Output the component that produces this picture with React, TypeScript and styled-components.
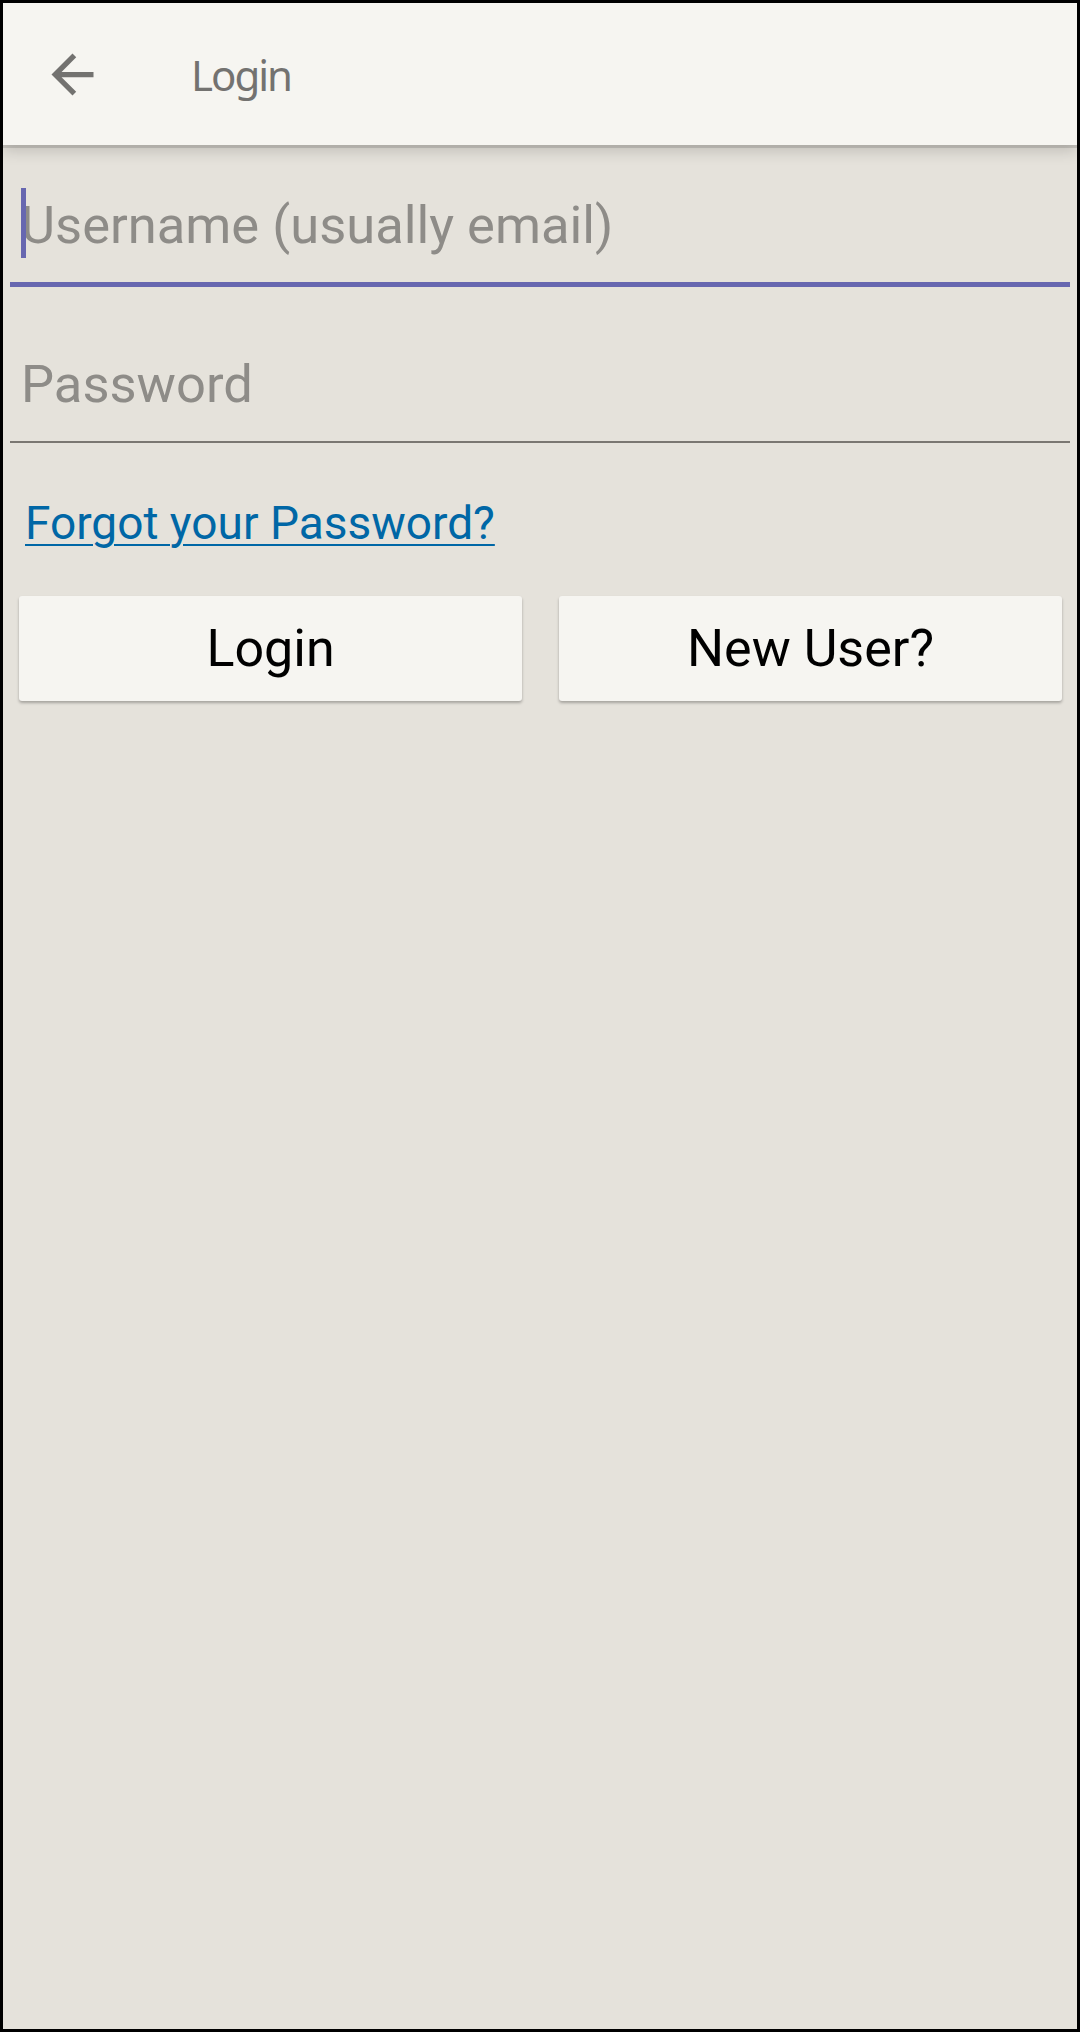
import styled, { createGlobalStyle } from "styled-components";

const GlobalStyle = createGlobalStyle`
  html, body {
    margin: 0;
    padding: 0;
    background: #000;
  }
  * {
    box-sizing: border-box;
  }
`;

const Screen = styled.div`
  width: 1080px;
  height: 2032px;
  border: 3px solid #000;
  background: #e5e2db;
  display: flex;
  flex-direction: column;
  font-family: Roboto, "Noto Sans", sans-serif;
  overflow: hidden;
`;

const AppBar = styled.header`
  position: relative;
  z-index: 1;
  height: 142px;
  flex-shrink: 0;
  display: flex;
  align-items: center;
  background: #f6f5f1;
  box-shadow: 0 3px 0 rgba(0, 0, 0, 0.12), 0 6px 14px rgba(0, 0, 0, 0.16);
`;

const BackButton = styled.button`
  margin-left: 38px;
  width: 63px;
  height: 63px;
  padding: 0;
  border: none;
  background: transparent;
  display: flex;
  align-items: center;
  justify-content: center;
  color: #737270;
  cursor: pointer;

  & svg {
    width: 63px;
    height: 63px;
    fill: currentColor;
  }
`;

const Title = styled.h1`
  margin: 0 0 0 87px;
  font-family: "Noto Sans", Roboto, sans-serif;
  font-weight: 400;
  font-size: 42px;
  letter-spacing: -2px;
  color: #737270;
`;

const Form = styled.main`
  display: flex;
  flex-direction: column;
`;

const Field = styled.div<{ $focused?: boolean }>`
  position: relative;
  margin: ${(p) => (p.$focused ? "0" : "17px")} 7px 0;
  padding: 45px 0 22px 11px;
  border-bottom: ${(p) => (p.$focused ? "5px solid #6767b0" : "2px solid #7a7772")};
`;

const Placeholder = styled.div`
  font-size: 52.5px;
  line-height: 70px;
  color: #8e8c88;
  white-space: nowrap;
`;

const Caret = styled.span`
  position: absolute;
  left: 11px;
  top: 43px;
  width: 5px;
  height: 70px;
  background: #6767b0;
`;

const ForgotLink = styled.a`
  align-self: flex-start;
  margin: 53px 0 0 22px;
  font-size: 46px;
  line-height: 54px;
  color: #0067a6;
  text-decoration: underline;
  text-decoration-thickness: 2px;
  text-underline-offset: 5px;
  cursor: pointer;
`;

const ButtonRow = styled.div`
  display: grid;
  grid-template-columns: 1fr 1fr;
  column-gap: 37px;
  margin-top: 46px;
  padding: 0 15px 0 16px;
`;

const ActionButton = styled.button`
  height: 105px;
  border: none;
  border-radius: 3px;
  background: #f6f5f1;
  box-shadow: 0 2px 3px rgba(0, 0, 0, 0.28);
  font-family: Roboto, sans-serif;
  font-size: 52px;
  color: #000;
  cursor: pointer;
`;

export default function App() {
  return (
    <>
      <GlobalStyle />
      <Screen>
        <AppBar>
          <BackButton aria-label="Back">
            <svg viewBox="0 0 24 24">
              <path d="M20 11H7.83l5.59-5.59L12 4l-8 8 8 8 1.41-1.41L7.83 13H20v-2z" />
            </svg>
          </BackButton>
          <Title>Login</Title>
        </AppBar>
        <Form>
          <Field $focused>
            <Caret />
            <Placeholder>Username (usually email)</Placeholder>
          </Field>
          <Field>
            <Placeholder>Password</Placeholder>
          </Field>
          <ForgotLink>Forgot your Password?</ForgotLink>
          <ButtonRow>
            <ActionButton>Login</ActionButton>
            <ActionButton>New User?</ActionButton>
          </ButtonRow>
        </Form>
      </Screen>
    </>
  );
}
